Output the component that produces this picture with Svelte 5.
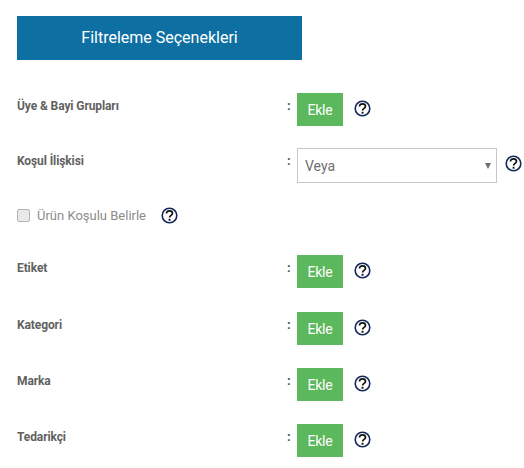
<script>
  const lower = [
    { label: 'Etiket', cls: 'r-etiket' },
    { label: 'Kategori', cls: 'r-kategori' },
    { label: 'Marka', cls: 'r-marka' },
    { label: 'Tedarikçi', cls: 'r-tedarikci' }
  ];
</script>

{#snippet help(cls = '')}
  <svg class="help {cls}" width="17" height="17" viewBox="0 0 17 17" aria-hidden="true">
    <circle cx="8.5" cy="8.5" r="7.300" fill="none" stroke="#14285a" stroke-width="1.600" />
    <path d="M5.500 6.500c0-1.700 1.300-2.700 3-2.700 1.700 0 3 1 3 2.500 0 2.100-2.900 2-2.900 4.200" fill="none" stroke="#111" stroke-width="1.700" />
    <rect x="7.600" y="11.800" width="1.900" height="1.900" fill="#111" />
  </svg>
{/snippet}

<div class="page">
  <h2 class="title">Filtreleme Seçenekleri</h2>

  <div class="row r-uye">
    <span class="label">Üye &amp; Bayi Grupları</span>
    <span class="colon">:</span>
    <button class="add">Ekle</button>
    {@render help()}
  </div>

  <div class="row r-kosul">
    <span class="label">Koşul İlişkisi</span>
    <span class="colon">:</span>
    <div class="select"><span>Veya</span><i class="arrow"></i></div>
    {@render help('near')}
  </div>

  <div class="check">
    <span class="box"></span>
    <span class="check-text">Ürün Koşulu Belirle</span>
    {@render help('check-help')}
  </div>

  {#each lower as row}
    <div class="row {row.cls}">
      <span class="label">{row.label}</span>
      <span class="colon">:</span>
      <button class="add">Ekle</button>
      {@render help()}
    </div>
  {/each}
</div>

<style>
  :global(body) {
    margin: 0;
    background: #fff;
  }
  .page {
    width: 524px;
    height: 468px;
    box-sizing: border-box;
    padding: 16px 0 0 17px;
    font-family: Roboto, "Liberation Sans", sans-serif;
    overflow: hidden;
  }
  .title {
    width: 285px;
    height: 44px;
    margin: 0;
    background: #0e6fa3;
    color: #fff;
    font-size: 16px;
    font-weight: 400;
    line-height: 44px;
    text-align: center;
  }
  .row {
    display: flex;
    align-items: flex-start;
  }
  .r-uye { margin-top: 33px; }
  .r-kosul { margin-top: 22px; }
  .r-etiket { margin-top: 32px; }
  .r-kategori { margin-top: 24px; }
  .r-marka { margin-top: 23px; }
  .r-tedarikci { margin-top: 23px; }
  .label {
    width: 269px;
    font-size: 12px;
    font-weight: 700;
    letter-spacing: -0.1px;
    color: #616161;
    line-height: 14px;
    margin-top: 6px;
  }
  .colon {
    width: 11px;
    font-size: 13px;
    font-weight: 700;
    color: #555;
    line-height: 14px;
    margin-top: 6px;
    padding-left: 1px;
    margin-right: -1px;
  }
  .add {
    width: 46px;
    height: 33px;
    padding: 1px 0 0;
    border: 0;
    background: #5cb85c;
    color: #fff;
    font: 400 14px Roboto, sans-serif;
    letter-spacing: -0.2px;
    line-height: 32px;
  }
  .help {
    display: block;
    margin: 7px 0 0 11px;
    flex: none;
  }
  .near {
    margin: 7px 0 0 8px;
  }
  .select {
    width: 200px;
    height: 35px;
    box-sizing: border-box;
    border: 1px solid #c6c6c6;
    display: flex;
    align-items: center;
    justify-content: space-between;
    padding: 0 5px 0 7px;
    font-size: 14px;
    color: #6f6f6f;
  }
  .arrow {
    width: 0;
    height: 0;
    border-left: 3px solid transparent;
    border-right: 3px solid transparent;
    border-top: 6px solid #6f6f6f;
  }
  .check {
    display: flex;
    align-items: center;
    height: 16px;
    margin-top: 24px;
  }
  .box {
    width: 11px;
    height: 11px;
    border: 1px solid #b5b5b5;
    border-radius: 2px;
    background: #e9e9e9;
  }
  .check-text {
    margin-left: 7px;
    font-size: 13px;
    color: #8c8c8c;
  }
  .check-help {
    margin: 0 0 0 15px;
  }
</style>
